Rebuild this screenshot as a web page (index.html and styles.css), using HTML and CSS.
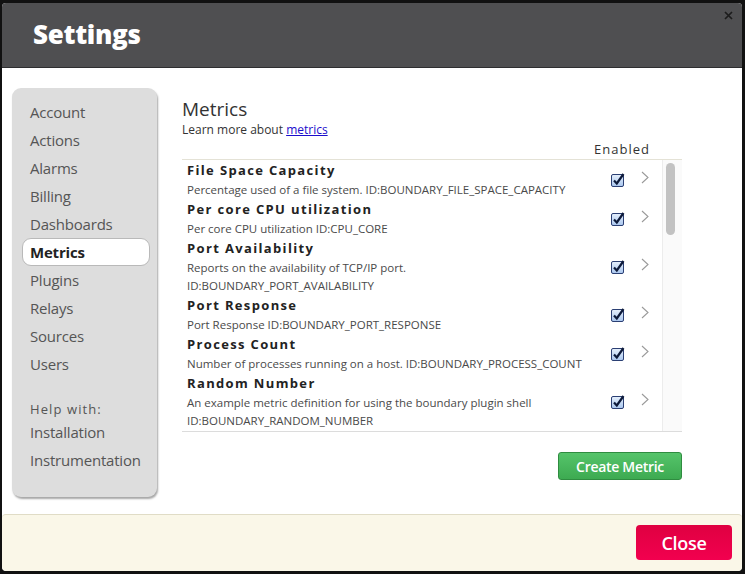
FILE: index.html
```html
<!DOCTYPE html>
<html>
<head>
<meta charset="utf-8">
<link rel="stylesheet" href="styles.css">
</head>
<body>
<div class="dialog">
  <div class="header">
    <h1 class="title">Settings</h1>
    <button class="x-btn" aria-label="close">
      <svg width="9" height="9" viewBox="0 0 9 9"><path d="M1 1 L8 8 M8 1 L1 8" stroke="#1c1c1c" stroke-width="1.7" fill="none"/></svg>
    </button>
  </div>
  <div class="body">
    <nav class="sidebar">
      <a class="nav-item">Account</a>
      <a class="nav-item">Actions</a>
      <a class="nav-item">Alarms</a>
      <a class="nav-item">Billing</a>
      <a class="nav-item">Dashboards</a>
      <a class="nav-item active">Metrics</a>
      <a class="nav-item">Plugins</a>
      <a class="nav-item">Relays</a>
      <a class="nav-item">Sources</a>
      <a class="nav-item">Users</a>
      <div class="help-label">Help with:</div>
      <a class="nav-item">Installation</a>
      <a class="nav-item">Instrumentation</a>
    </nav>
    <main class="main">
      <h2 class="heading">Metrics</h2>
      <p class="learn">Learn more about <a class="link">metrics</a></p>
      <div class="enabled-head">Enabled</div>
      <div class="table">
        <div class="list">
          <div class="row">
            <div class="info"><div class="name">File Space Capacity</div><div class="desc">Percentage used of a file system. ID:BOUNDARY_FILE_SPACE_CAPACITY</div></div>
            <span class="check"><svg width="14" height="14" viewBox="0 0 14 14"><rect x="0.5" y="1.5" width="12" height="12" rx="1.5" fill="url(#g)" stroke="#2b3f73"/><path d="M3 7.5 L5.8 10.5 L12.5 1" stroke="#0d1a3a" stroke-width="2.2" fill="none"/></svg></span>
            <span class="chev"><svg width="8" height="13" viewBox="0 0 8 13"><path d="M1 1 L7 6.5 L1 12" stroke="#9a9a9a" stroke-width="1.1" fill="none"/></svg></span>
          </div>
          <div class="row">
            <div class="info"><div class="name">Per core CPU utilization</div><div class="desc">Per core CPU utilization ID:CPU_CORE</div></div>
            <span class="check"><svg width="14" height="14" viewBox="0 0 14 14"><rect x="0.5" y="1.5" width="12" height="12" rx="1.5" fill="url(#g)" stroke="#2b3f73"/><path d="M3 7.5 L5.8 10.5 L12.5 1" stroke="#0d1a3a" stroke-width="2.2" fill="none"/></svg></span>
            <span class="chev"><svg width="8" height="13" viewBox="0 0 8 13"><path d="M1 1 L7 6.5 L1 12" stroke="#9a9a9a" stroke-width="1.1" fill="none"/></svg></span>
          </div>
          <div class="row">
            <div class="info"><div class="name">Port Availability</div><div class="desc">Reports on the availability of TCP/IP port. ID:BOUNDARY_PORT_AVAILABILITY</div></div>
            <span class="check"><svg width="14" height="14" viewBox="0 0 14 14"><rect x="0.5" y="1.5" width="12" height="12" rx="1.5" fill="url(#g)" stroke="#2b3f73"/><path d="M3 7.5 L5.8 10.5 L12.5 1" stroke="#0d1a3a" stroke-width="2.2" fill="none"/></svg></span>
            <span class="chev"><svg width="8" height="13" viewBox="0 0 8 13"><path d="M1 1 L7 6.5 L1 12" stroke="#9a9a9a" stroke-width="1.1" fill="none"/></svg></span>
          </div>
          <div class="row">
            <div class="info"><div class="name">Port Response</div><div class="desc">Port Response ID:BOUNDARY_PORT_RESPONSE</div></div>
            <span class="check"><svg width="14" height="14" viewBox="0 0 14 14"><rect x="0.5" y="1.5" width="12" height="12" rx="1.5" fill="url(#g)" stroke="#2b3f73"/><path d="M3 7.5 L5.8 10.5 L12.5 1" stroke="#0d1a3a" stroke-width="2.2" fill="none"/></svg></span>
            <span class="chev"><svg width="8" height="13" viewBox="0 0 8 13"><path d="M1 1 L7 6.5 L1 12" stroke="#9a9a9a" stroke-width="1.1" fill="none"/></svg></span>
          </div>
          <div class="row">
            <div class="info"><div class="name">Process Count</div><div class="desc">Number of processes running on a host. ID:BOUNDARY_PROCESS_COUNT</div></div>
            <span class="check"><svg width="14" height="14" viewBox="0 0 14 14"><rect x="0.5" y="1.5" width="12" height="12" rx="1.5" fill="url(#g)" stroke="#2b3f73"/><path d="M3 7.5 L5.8 10.5 L12.5 1" stroke="#0d1a3a" stroke-width="2.2" fill="none"/></svg></span>
            <span class="chev"><svg width="8" height="13" viewBox="0 0 8 13"><path d="M1 1 L7 6.5 L1 12" stroke="#9a9a9a" stroke-width="1.1" fill="none"/></svg></span>
          </div>
          <div class="row">
            <div class="info"><div class="name">Random Number</div><div class="desc">An example metric definition for using the boundary plugin shell ID:BOUNDARY_RANDOM_NUMBER</div></div>
            <span class="check"><svg width="14" height="14" viewBox="0 0 14 14"><rect x="0.5" y="1.5" width="12" height="12" rx="1.5" fill="url(#g)" stroke="#2b3f73"/><path d="M3 7.5 L5.8 10.5 L12.5 1" stroke="#0d1a3a" stroke-width="2.2" fill="none"/></svg></span>
            <span class="chev"><svg width="8" height="13" viewBox="0 0 8 13"><path d="M1 1 L7 6.5 L1 12" stroke="#9a9a9a" stroke-width="1.1" fill="none"/></svg></span>
          </div>
        </div>
        <div class="scroll-track"><div class="scroll-thumb"></div></div>
      </div>
      <div class="actions"><button class="btn-create">Create Metric</button></div>
    </main>
  </div>
  <div class="footer">
    <button class="btn-close">Close</button>
  </div>
</div>
<svg width="0" height="0" class="defs"><defs><linearGradient id="g" x1="0" y1="0" x2="0" y2="1"><stop offset="0" stop-color="#e6f0fc"/><stop offset="1" stop-color="#a9c6ee"/></linearGradient></defs></svg>
</body>
</html>
```
FILE: styles.css
```css
html, body {
  margin: 0;
  padding: 0;
  background: #111111;
  font-family: "Open Sans", "Liberation Sans", sans-serif;
  color: #333;
}
.defs { position: absolute; }
.dialog {
  margin: 3px 3px 0 2px;
  width: 740px;
  height: 568px;
  border-radius: 4px;
  overflow: hidden;
  display: flex;
  flex-direction: column;
  background: #fff;
}
.header {
  height: 64px;
  flex: none;
  background: #4f4f51;
  border-bottom: 1px solid #2e2e30;
  position: relative;
  display: flex;
  align-items: center;
  padding-left: 31px;
}
.title {
  margin: 0;
  color: #fff;
  font-family: "Open Sans", sans-serif;
  font-weight: 800;
  font-size: 26px;
  letter-spacing: -0.3px;
  margin-top: -2px;
}
.x-btn {
  position: absolute;
  top: 8px;
  right: 9px;
  border: 0;
  background: none;
  padding: 0;
  width: 9px;
  height: 9px;
  display: flex;
}
.body {
  flex: 1;
  display: flex;
  padding: 20px 0 0 10px;
  border-top-left-radius: 4px;
  background: #fff;
}
.sidebar {
  width: 145px;
  height: 399px;
  padding-top: 10px;
  background: #dddddd;
  border-radius: 9px;
  box-shadow: 1px 2px 2px rgba(0,0,0,0.35);
  display: flex;
  flex-direction: column;
  flex: none;
}
.nav-item {
  display: block;
  font-size: 15px;
  line-height: 28px;
  color: #555;
  padding-left: 18px;
  letter-spacing: -0.2px;
}
.nav-item.active {
  margin: 0 7px 0 10px;
  padding-left: 7px;
  line-height: 26px;
  background: #fff;
  border: 1px solid #b9b9b9;
  border-radius: 9px;
  font-weight: 700;
  color: #222;
}
.help-label {
  margin-top: 21px;
  padding-left: 18px;
  font-size: 13px;
  letter-spacing: 1.1px;
  line-height: 20px;
  color: #555;
  margin-bottom: -1px;
}
.main {
  margin-left: 25px;
  width: 500px;
  padding-top: 8px;
  display: flex;
  flex-direction: column;
}
.heading {
  margin: 0;
  font-weight: 400;
  font-size: 19px;
  line-height: 26px;
  color: #333;
}
.learn {
  margin: 0;
  font-size: 12px;
  line-height: 16px;
  color: #333;
}
.link {
  color: #1a0dcc;
  text-decoration: underline;
}
.enabled-head {
  margin-top: 3px;
  text-align: right;
  padding-right: 32px;
  font-size: 13px;
  letter-spacing: 1px;
  line-height: 16px;
  color: #333;
}
.table {
  margin-top: 2px;
  height: 271px;
  border-top: 1px solid #e4e2d6;
  border-bottom: 1px solid #dcdcdc;
  display: flex;
  overflow: hidden;
}
.list {
  flex: 1;
  padding-left: 5px;
  overflow: hidden;
}
.row {
  display: grid;
  grid-template-columns: 425px 13px 24px;
  align-items: center;
}
.info { padding-right: 22px; }
.name {
  font-weight: 700;
  font-size: 13px;
  line-height: 21px;
  letter-spacing: 1.35px;
  color: #222;
}
.desc {
  font-size: 11.5px;
  line-height: 18px;
  color: #4a4a4a;
}
.check { display: flex; margin-left: -1px; }
.check svg, .chev svg { flex: none; }
.chev {
  display: flex;
  padding-left: 16px;
  margin-top: -5px;
}
.scroll-track {
  width: 14px;
  border-left: 1px solid #ececec;
  background: #fafafa;
  padding: 3px 2px 0 3px;
  flex: none;
}
.scroll-thumb {
  width: 9px;
  height: 72px;
  border-radius: 5px;
  background: #c2c2c2;
}
.actions {
  display: flex;
  justify-content: flex-end;
  margin-top: 20px;
}
.btn-create {
  width: 124px;
  height: 28px;
  border: 1px solid #2f8c40;
  border-radius: 3px;
  background: linear-gradient(#55c46a, #3daa51);
  color: #fff;
  font-family: "Open Sans", sans-serif;
  font-size: 14px;
  font-weight: 600;
  letter-spacing: -0.3px;
  padding: 0;
}
.footer {
  height: 56px;
  flex: none;
  background: #faf7e8;
  border-top: 1px solid #e0dcc6;
  border-radius: 4px;
  display: flex;
  justify-content: flex-end;
  align-items: flex-start;
  padding-right: 10px;
}
.btn-close {
  margin-top: 10px;
  width: 96px;
  height: 35px;
  border: 0;
  border-radius: 4px;
  background: linear-gradient(#df0041, #f2004f);
  color: #fff;
  font-family: "Open Sans", sans-serif;
  font-size: 18px;
  font-weight: 600;
  letter-spacing: -0.3px;
  padding: 0;
}
```
